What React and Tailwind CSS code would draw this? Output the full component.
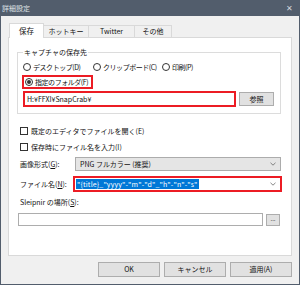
import React from 'react';

const font = { fontFamily: '"Noto Sans CJK JP", "Noto Sans", sans-serif' };

function Radio({ checked, label, className = '' }) {
  return (
    <div className={`flex items-center gap-[2px] whitespace-nowrap ${className}`}>
      <span className="w-[8px] h-[8px] shrink-0 rounded-full border border-[#333] bg-white flex items-center justify-center">
        {checked && <span className="w-[4px] h-[4px] rounded-full bg-[#333]" />}
      </span>
      <span className="tracking-[-0.45px]">{label}</span>
    </div>
  );
}

function Check({ label }) {
  return (
    <div className="flex items-center gap-[3px] whitespace-nowrap h-[8px]">
      <span className="w-[8px] h-[8px] shrink-0 border border-[#333] bg-white" />
      <span>{label}</span>
    </div>
  );
}

function Chevron() {
  return (
    <svg width="6" height="4" viewBox="0 0 6 4" className="mr-[4px]">
      <path d="M0.5 0.8 L3 3.2 L5.5 0.8" fill="none" stroke="#666" strokeWidth="0.8" />
    </svg>
  );
}

export default function App() {
  return (
    <div className="w-[300px] h-[285px] bg-[#525d6c] flex flex-col text-[7px] leading-none text-[#111]" style={font}>
      {/* Title bar */}
      <div className="h-[16px] flex items-center justify-between pl-[2px] text-[#dfe2e6]">
        <span className="text-[7px]">詳細設定</span>
        <span className="text-[8px] mr-[7px] text-[#d3d7dc]">✕</span>
      </div>

      <div className="flex-1 mx-[1px] mb-[1px] bg-[#f0f0f0] flex flex-col">
        {/* Tabs */}
        <div className="flex items-end pl-[8px] pt-[7px]">
          <div className="w-[35px] h-[15px] bg-white border border-b-0 border-[#d9d9d9] flex items-center justify-center z-10 -mb-[1px] -mr-[1px] pb-[1px] text-[7.5px]">保存</div>
          <div className="w-[46px] h-[12px] border border-b-0 border-[#d9d9d9] flex items-center justify-center">ホットキー</div>
          <div className="w-[46px] h-[12px] border border-l-0 border-b-0 border-[#d9d9d9] flex items-center justify-center">Twitter</div>
          <div className="w-[37px] h-[12px] border border-l-0 border-b-0 border-[#d9d9d9] flex items-center justify-center">その他</div>
        </div>

        {/* Panel */}
        <div className="ml-[7px] w-[284px] h-[219px] bg-white border border-[#d9d9d9] flex flex-col">
          {/* Group box */}
          <div className="mt-[14px] ml-[8px] w-[264px] h-[62px] relative border border-[#dcdcdc] flex flex-col">
            <span className="absolute -top-[4px] left-[5px] bg-white px-[1px] whitespace-nowrap">キャプチャの保存先</span>
            <div className="flex items-center mt-[10px] ml-[5px]">
              <Radio className="w-[70px]" label="デスクトップ(D)" />
              <Radio className="w-[69px]" label="クリップボード(C)" />
              <Radio label="印刷(P)" />
            </div>
            <div className="mt-[4px] ml-[4px] w-[71px] h-[14px] border-2 border-[#ec1c24] flex items-center pl-[1px]">
              <Radio checked label="指定のフォルダ(F)" />
            </div>
            <div className="flex items-center mt-[2px] ml-[5px]">
              <div className="w-[213px] h-[16px] border-2 border-[#ec1c24] flex items-center pl-[2px] whitespace-nowrap">H:¥FFXI¥SnapCrab¥</div>
              <div className="ml-[3px] w-[35px] h-[14px] bg-[#e1e1e1] border border-[#adadad] flex items-center justify-center">参照</div>
            </div>
          </div>

          <div className="mt-[13px] ml-[11px] flex flex-col gap-[8px]">
            <Check label="既定のエディタでファイルを開く(E)" />
            <Check label="保存時にファイル名を入力(I)" />
          </div>

          <div className="mt-[6px] ml-[11px] flex items-center">
            <span className="w-[55px] whitespace-nowrap">画像形式(<u>G</u>):</span>
            <div className="w-[206px] h-[14px] bg-[#e5e5e5] border border-[#acacac] flex items-center justify-between pl-[4px] whitespace-nowrap">
              <span>PNG フルカラー (推奨)</span>
              <Chevron />
            </div>
          </div>

          <div className="mt-[5px] ml-[11px] flex items-center">
            <span className="w-[53px] whitespace-nowrap">ファイル名(<u>N</u>):</span>
            <div className="w-[209px] h-[16px] border-2 border-[#ec1c24] flex items-center justify-between pl-[1px] whitespace-nowrap">
              <span className="bg-[#0078d7] text-white px-[1px] py-[1.5px] tracking-[0.15px]">"{'{title}'}_"yyyy"-"m"-"d"_"h"-"n"-"s"</span>
              <Chevron />
            </div>
          </div>

          <div className="mt-[7px] ml-[11px] whitespace-nowrap">Sleipnir の場所(<u>S</u>):</div>
          <div className="mt-[7px] ml-[9px] flex items-center">
            <div className="w-[245px] h-[13px] bg-white border border-[#adadad]" />
            <div className="ml-[3px] w-[14px] h-[12px] bg-[#e1e1e1] border border-[#adadad] flex items-center justify-center text-[6px] pb-[2px]">...</div>
          </div>
        </div>

        {/* Buttons */}
        <div className="flex items-center gap-[4px] pl-[97px] mt-[6px]">
          <div className="w-[62px] h-[15px] bg-[#e1e1e1] border border-[#adadad] flex items-center justify-center">OK</div>
          <div className="w-[62px] h-[15px] bg-[#e1e1e1] border border-[#adadad] flex items-center justify-center">キャンセル</div>
          <div className="w-[62px] h-[15px] bg-[#e1e1e1] border border-[#adadad] flex items-center justify-center">適用(A)</div>
        </div>
      </div>
    </div>
  );
}
